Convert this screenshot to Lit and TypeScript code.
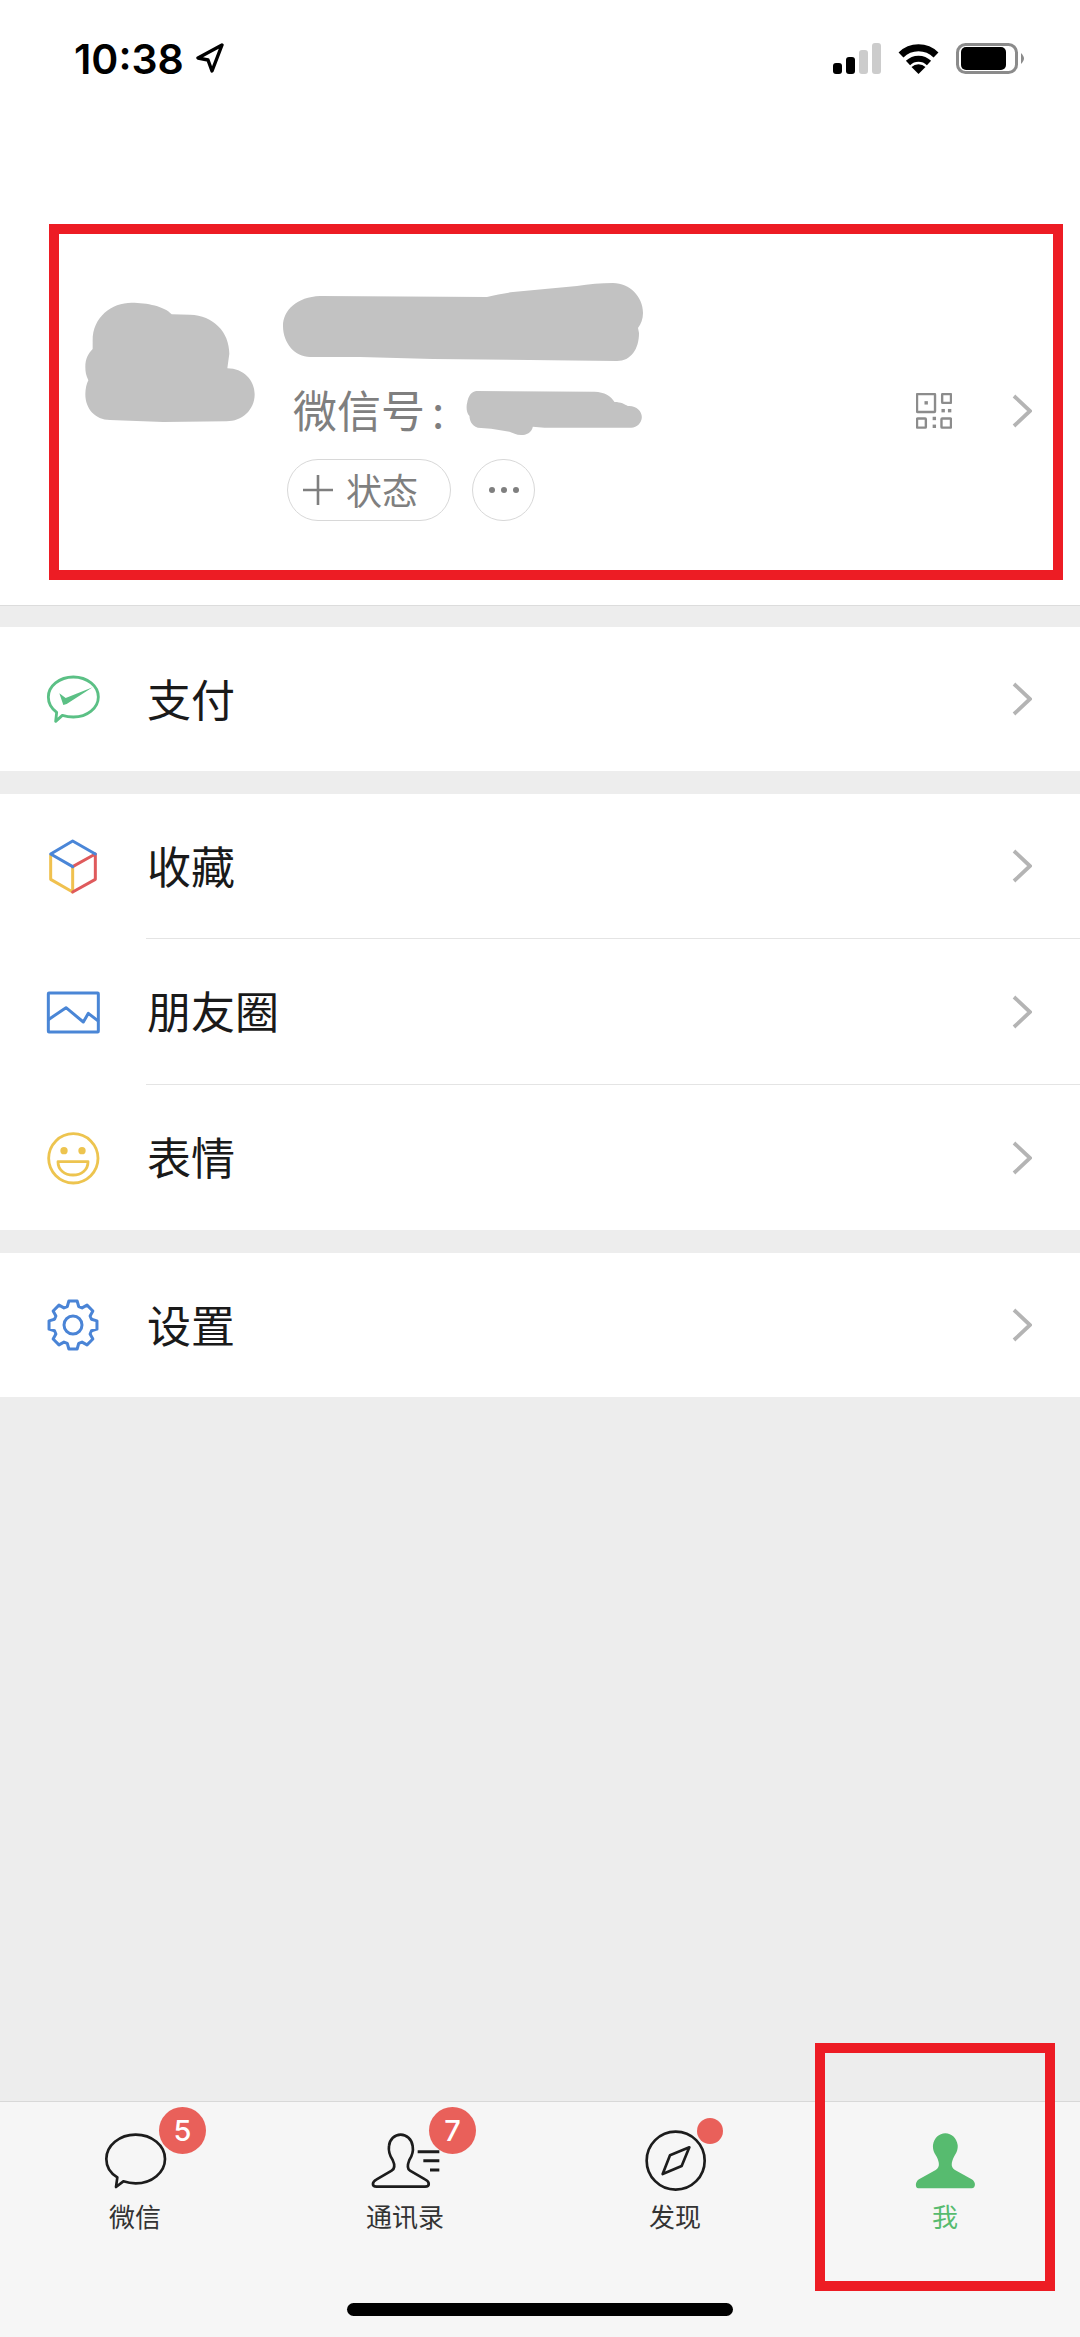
import { LitElement, css, html } from 'lit';
import { customElement } from 'lit/decorators.js';

const chevron = html`
  <svg class="chevron" viewBox="0 0 20 34" width="20" height="34">
    <path d="M2 2 L18 17 L2 32" fill="none" stroke="#b4b4b4" stroke-width="3.8" />
  </svg>
`;

// eight toothed gear, coordinates taken from the zoomed reference
function gearPath(cx: number, cy: number) {
  const pts: string[] = [];
  for (let i = 0; i < 8; i++) {
    const a = (i * Math.PI) / 4 - Math.PI / 2;
    for (const [r, d] of [[58, -0.3], [73, -0.17], [73, 0.17], [58, 0.3]]) {
      pts.push(`${(cx + r * Math.cos(a + d)).toFixed(1)} ${(cy + r * Math.sin(a + d)).toFixed(1)}`);
    }
  }
  return `M${pts.join(' L')} Z`;
}

const rowIcons = {
  pay: html`
    <svg viewBox="69 87 180 180" width="60" height="60">
      <path d="M110 217 C95 206 85 190 85 171 C85 138 118 111 160 111 C202 111 235 138 235 171 C235 204 202 231 160 231 C148 231 137 229 127 226 L107 244 Z"
        fill="none" stroke="#5bc085" stroke-width="8.5" stroke-linejoin="round" />
      <path d="M118 160 L137 174 L218 142 L140 192 L130 195 Z" fill="#5bc085" />
    </svg>
  `,
  cube: html`
    <svg viewBox="69 588 180 180" width="60" height="60" fill="none" stroke-width="9" stroke-linecap="round" stroke-linejoin="round">
      <path d="M92 646 V718 L158 756 V680" stroke="#f0c14f" />
      <path d="M158 756 L226 718 V642 L158 680" stroke="#df5a5c" />
      <path d="M226 642 L158 603 L92 642 L158 680" stroke="#4a86d8" />
    </svg>
  `,
  moments: html`
    <svg viewBox="69 64 180 180" width="60" height="60" fill="none" stroke="#4a86d6" stroke-width="9" stroke-linejoin="round">
      <rect x="85" y="97" width="150" height="117" rx="2" />
      <path d="M85 177 L138 141 L190 184 L205 158 L236 182" />
    </svg>
  `,
  emoji: html`
    <svg viewBox="69 502 180 180" width="60" height="60" fill="none" stroke="#edc44f" stroke-width="8.5">
      <circle cx="160" cy="593" r="74" />
      <circle cx="132" cy="570" r="11" fill="#edc44f" stroke="none" />
      <circle cx="186" cy="570" r="11" fill="#edc44f" stroke="none" />
      <path d="M114 603 H204 C204 628 184 643 159 643 C134 643 114 628 114 603 Z" stroke-linejoin="round" />
    </svg>
  `,
  gear: html`
    <svg viewBox="69 165 180 180" width="60" height="60" fill="none" stroke="#4a84d6" stroke-width="9" stroke-linejoin="round">
      <path d=${gearPath(159, 255)} />
      <circle cx="159" cy="255" r="27" />
    </svg>
  `,
};

const tabIcons = {
  chats: html`
    <svg viewBox="105 120 240 183" width="80" height="61">
      <path d="M172 262 C150 249 139 229 139 207 C139 167 178 134 227 134 C276 134 315 167 315 207 C315 247 276 280 227 280 C212 280 199 277 190 274 L168 291 Z"
        fill="none" stroke="#1c1c1c" stroke-width="8" stroke-linejoin="round" />
    </svg>
  `,
  contacts: html`
    <svg viewBox="915 120 240 183" width="80" height="61" fill="none" stroke="#1c1c1c" stroke-width="8">
      <path d="M950 290 H1095 C1110 290 1110 275 1095 268 L1050 242 C1040 236 1042 225 1048 210 C1058 195 1060 180 1058 168 C1055 148 1040 134 1022 134 C1004 134 989 148 987 168 C985 182 990 198 998 210 C1005 225 1005 236 995 242 L950 268 C935 276 935 290 950 290 Z" stroke-linejoin="round" />
      <path d="M1073 185 H1138 M1090 212 H1138 M1110 240 H1138" stroke-width="9" />
    </svg>
  `,
  discover: html`
    <svg viewBox="105 300 240 183" width="80" height="61" fill="none" stroke="#1c1c1c" stroke-width="8">
      <circle cx="227" cy="392" r="87" />
      <path d="M268 352 L245 408 L188 432 L210 376 Z" stroke-linejoin="round" />
    </svg>
  `,
  me: html`
    <svg viewBox="915 300 240 183" width="80" height="61">
      <path d="M955 475 H1115 C1128 475 1128 455 1115 448 L1065 420 C1050 410 1055 395 1062 380 C1072 365 1074 355 1073 345 C1070 325 1055 310 1036 310 C1017 310 1002 325 999 345 C998 355 1000 365 1010 380 C1017 395 1022 410 1007 420 L957 448 C945 455 945 475 955 475 Z" fill="#57bb6f" />
    </svg>
  `,
};

const groups = [
  [{ icon: rowIcons.pay, label: '支付' }],
  [
    { icon: rowIcons.cube, label: '收藏' },
    { icon: rowIcons.moments, label: '朋友圈' },
    { icon: rowIcons.emoji, label: '表情' },
  ],
  [{ icon: rowIcons.gear, label: '设置' }],
];

const tabs = [
  { icon: tabIcons.chats, label: '微信', badge: '5' },
  { icon: tabIcons.contacts, label: '通讯录', badge: '7' },
  { icon: tabIcons.discover, label: '发现', dot: true },
  { icon: tabIcons.me, label: '我', active: true },
];

@customElement('app-root')
export class AppRoot extends LitElement {
  static styles = css`
    :host {
      display: flex;
      flex-direction: column;
      position: relative;
      width: 1080px;
      height: 2337px;
      background: #ededed;
      overflow: hidden;
      font-family: "Noto Sans CJK SC", "Noto Sans", sans-serif;
    }

    svg {
      display: block;
      flex: none;
    }

    .status {
      display: flex;
      justify-content: space-between;
      box-sizing: border-box;
      height: 120px;
      padding: 43px 56px 0 74px;
      background: #fff;
    }

    .clock {
      display: flex;
      align-items: flex-start;
      gap: 12px;
    }

    .time {
      font-family: Inter, sans-serif;
      font-size: 41px;
      font-weight: 600;
      line-height: 32px;
      color: #000;
    }

    .indicators {
      display: flex;
      gap: 17px;
    }

    .profile {
      display: flex;
      align-items: flex-start;
      box-sizing: border-box;
      height: 486px;
      padding: 163px 48px 0 85px;
      background: #fff;
      border-bottom: 1px solid #dcdcdc;
    }

    .avatar {
      margin-top: 19px;
      margin-right: 28px;
    }

    .info {
      flex: 1;
    }

    .id-row {
      display: flex;
      align-items: center;
      height: 45px;
      margin-top: 26px;
      padding-left: 10px;
      font-size: 44px;
      line-height: 41px;
      color: #7f7f7f;
    }

    .id-row span {
      margin-bottom: 3px;
    }

    .colon {
      margin-left: 7px;
    }

    .id-blob {
      margin-left: 22px;
      margin-top: 4px;
    }

    .qr {
      margin-left: auto;
      margin-right: 60px;
    }

    .chips {
      display: flex;
      gap: 21px;
      margin-top: 26px;
      margin-left: 4px;
    }

    .chip {
      display: flex;
      align-items: center;
      justify-content: center;
      box-sizing: border-box;
      height: 62px;
      border: 1.5px solid #d8d8d8;
      border-radius: 31px;
      font-size: 36px;
      color: #7f7f7f;
    }

    .chip span {
      margin-bottom: 2px;
    }

    .chip.status-chip {
      width: 164px;
      gap: 13px;
      justify-content: flex-start;
      padding-left: 15px;
    }

    .chip.more {
      width: 63px;
      gap: 6px;
    }

    .chip.more i {
      width: 6px;
      height: 6px;
      border-radius: 50%;
      background: #7f7f7f;
    }

    .group {
      margin-top: 21px;
      background: #fff;
    }

    .group + .group {
      margin-top: 23px;
    }

    .row {
      display: flex;
      align-items: center;
      height: 144px;
      padding: 0 48px 0 43px;
    }

    .sep {
      height: 1px;
      margin-left: 146px;
      background: #e4e4e4;
    }

    .sep + .row {
      height: 145px;
    }

    .row-label {
      margin-left: 44px;
      margin-bottom: 3px;
      font-size: 44px;
      line-height: 1;
      color: #1a1a1a;
    }

    .row .chevron {
      margin-left: auto;
    }

    .tabbar {
      margin-top: auto;
      height: 236px;
      box-sizing: border-box;
      background: #f6f6f6;
      border-top: 1px solid #d8d8d8;
    }

    .tabs {
      display: grid;
      grid-template-columns: repeat(4, 270px);
      height: 201px;
    }

    .tab {
      display: flex;
      flex-direction: column;
      align-items: center;
      position: relative;
      padding-top: 28px;
      font-size: 26px;
      line-height: 30px;
      color: #333;
    }

    .tab.active {
      color: #57bb6f;
    }

    .tab-label {
      margin-top: 10px;
    }

    .badge {
      position: absolute;
      left: 159px;
      top: 5px;
      width: 47px;
      height: 47px;
      border-radius: 50%;
      background: #e9605a;
      color: #fff;
      font-family: Inter, sans-serif;
      font-size: 29px;
      font-weight: 500;
      line-height: 47px;
      text-align: center;
    }

    .dot {
      position: absolute;
      left: 157px;
      top: 16px;
      width: 26px;
      height: 26px;
      border-radius: 50%;
      background: #e9605a;
    }

    .home {
      width: 386px;
      height: 13px;
      margin: 0 auto;
      border-radius: 7px;
      background: #000;
    }

    .mark {
      position: absolute;
      box-sizing: border-box;
      border: 10px solid #ed1c24;
    }

    .mark.profile-mark {
      left: 49px;
      top: 224px;
      width: 1014px;
      height: 356px;
    }

    .mark.tab-mark {
      left: 815px;
      top: 2043px;
      width: 240px;
      height: 248px;
    }
  `;

  renderStatus() {
    return html`
      <div class="status">
        <div class="clock">
          <span class="time">10:38</span>
          <svg viewBox="0 0 28 30" width="28" height="30">
            <path d="M26 2 L2 15 L12 17 L16 28 Z" fill="none" stroke="#000" stroke-width="3.4" stroke-linejoin="round" />
          </svg>
        </div>
        <div class="indicators">
          <svg viewBox="0 0 48 31" width="48" height="31">
            <rect x="0" y="20" width="9" height="11" rx="3" fill="#000" />
            <rect x="13" y="14" width="9" height="17" rx="3" fill="#000" />
            <rect x="26" y="7" width="9" height="24" rx="3" fill="#ccc" />
            <rect x="39" y="0" width="9" height="31" rx="3" fill="#ccc" />
          </svg>
          <svg viewBox="0 0 41 31" width="41" height="31">
            <path d="M3 12 A25 25 0 0 1 38 12" fill="none" stroke="#000" stroke-width="7" />
            <path d="M10 20 A15 15 0 0 1 31 20" fill="none" stroke="#000" stroke-width="6" />
            <path d="M20.5 31 L13.5 24 A10 10 0 0 1 27.5 24 Z" fill="#000" />
          </svg>
          <svg viewBox="0 0 68 31" width="68" height="31">
            <rect x="1.5" y="1.5" width="59" height="28" rx="8" fill="none" stroke="#8b8b8b" stroke-width="3" />
            <rect x="5" y="4" width="45" height="23" rx="5" fill="#000" />
            <path d="M65 10 C67 12 68 14 68 15.5 C68 17 67 19 65 21 Z" fill="#8b8b8b" />
          </svg>
        </div>
      </div>
    `;
  }

  renderProfile() {
    return html`
      <div class="profile">
        <svg class="avatar" viewBox="45 95 510 360" width="170" height="120">
          <path d="M68 210 C68 140 125 97 185 97 C230 97 285 108 305 132 L360 133 C430 135 478 185 478 250 L472 294 C520 294 554 330 554 372 C554 420 515 453 470 453 L280 455 L120 449 C75 449 46 415 46 372 C46 355 50 340 55 330 C48 315 46 305 46 290 C46 265 55 250 68 236 Z" fill="#c2c2c2" />
        </svg>
        <div class="info">
          <svg viewBox="0 0 361 79" width="361" height="79">
            <path d="M37 13 L204 14 C212 12 222 10 230 9 L294 3 C306 1 318 0 330 0 C347 0 360 14 360 30 C360 36 358 41 355 45 L356 50 C356 66 348 78 334 78 L150 76 L77 74 L27 74 C12 74 0 60 0 43 C0 27 14 14 37 13 Z" fill="#c2c2c2" />
          </svg>
          <div class="id-row">
            <span>微信号</span><span class="colon">:</span>
            <svg class="id-blob" viewBox="325 365 527 132" width="176" height="44">
              <path d="M355 365 L710 367 C740 368 760 380 770 398 C790 398 800 405 810 410 C835 408 852 425 852 443 C852 460 838 475 820 475 L560 475 L525 472 C522 490 505 497 490 497 C475 497 465 490 455 487 L400 478 L360 475 C340 470 335 450 335 440 C325 430 325 410 328 400 C332 380 340 367 355 365 Z" fill="#c2c2c2" />
            </svg>
            <svg class="qr" viewBox="108 100 106 106" width="36" height="36" fill="none" stroke="#8c8c8c" stroke-width="7">
              <rect x="111" y="103" width="53" height="53" rx="2" />
              <rect x="185" y="103" width="26" height="26" rx="2" />
              <rect x="111" y="175" width="26" height="27" rx="2" />
              <rect x="183" y="175" width="28" height="27" rx="2" />
              <g fill="#8c8c8c" stroke="none">
                <rect x="133" y="124" width="10" height="10" />
                <rect x="183" y="147" width="10" height="10" />
                <rect x="202" y="147" width="10" height="10" />
                <rect x="157" y="170" width="10" height="10" />
                <rect x="157" y="193" width="10" height="10" />
              </g>
            </svg>
            ${chevron}
          </div>
          <div class="chips">
            <div class="chip status-chip">
              <svg viewBox="0 0 30 30" width="30" height="30">
                <path d="M0 15 H30 M15 0 V30" stroke="#7f7f7f" stroke-width="2.6" />
              </svg>
              <span>状态</span>
            </div>
            <div class="chip more"><i></i><i></i><i></i></div>
          </div>
        </div>
      </div>
    `;
  }

  renderGroup(rows: { icon: unknown; label: string }[]) {
    return html`
      <div class="group">
        ${rows.map(
          (row, i) => html`
            ${i > 0 ? html`<div class="sep"></div>` : ''}
            <div class="row">
              ${row.icon}
              <span class="row-label">${row.label}</span>
              ${chevron}
            </div>
          `
        )}
      </div>
    `;
  }

  render() {
    return html`
      ${this.renderStatus()}
      ${this.renderProfile()}
      ${groups.map((g) => this.renderGroup(g))}
      <div class="tabbar">
        <div class="tabs">
          ${tabs.map(
            (tab) => html`
              <div class="tab ${tab.active ? 'active' : ''}">
                ${tab.icon}
                <span class="tab-label">${tab.label}</span>
                ${tab.badge ? html`<span class="badge">${tab.badge}</span>` : ''}
                ${tab.dot ? html`<span class="dot"></span>` : ''}
              </div>
            `
          )}
        </div>
        <div class="home"></div>
      </div>
      <div class="mark profile-mark"></div>
      <div class="mark tab-mark"></div>
    `;
  }
}
